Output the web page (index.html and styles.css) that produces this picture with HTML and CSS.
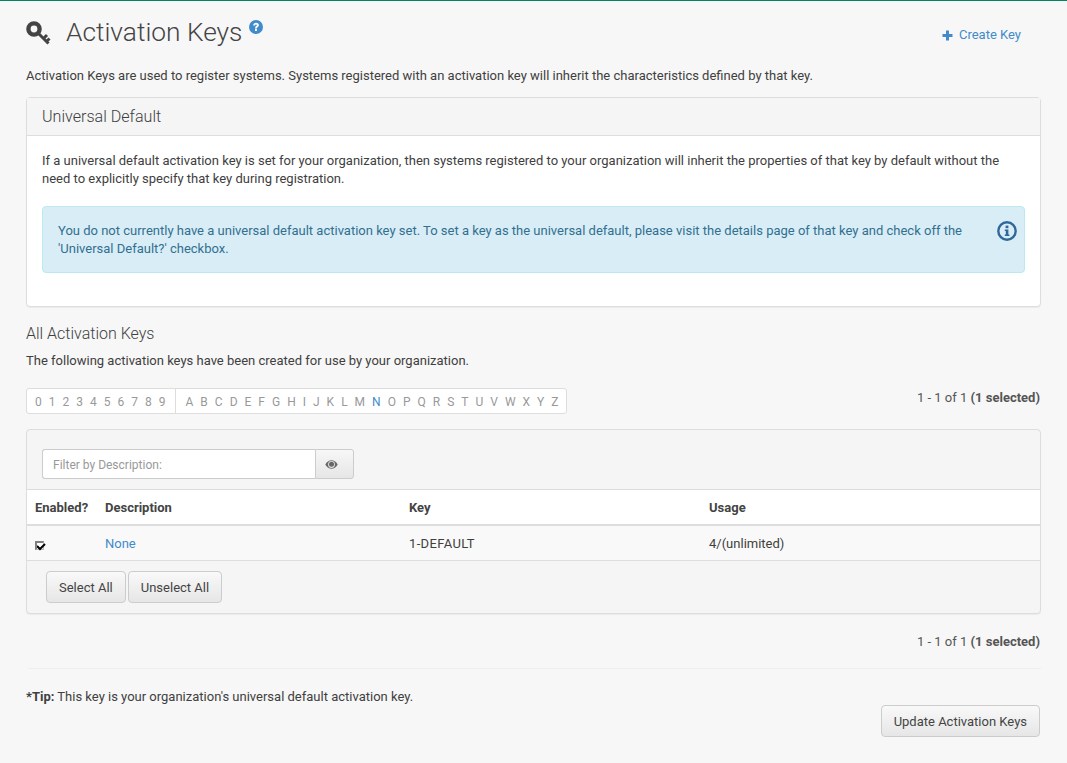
FILE: index.html
```html
<!DOCTYPE html>
<html lang="en">
<head>
<meta charset="UTF-8">
<title>Activation Keys</title>
<link rel="stylesheet" href="styles.css">
</head>
<body>
<div class="page">
  <div class="toolbar">
    <div class="title-wrap">
      <svg class="key-icon" width="26" height="26" viewBox="0 0 26 26">
        <circle cx="8" cy="8" r="5.6" fill="none" stroke="#444" stroke-width="4.4"/>
        <path d="M12 12L22.5 22.5M17.5 17.5l3.5-3.5M20.5 20.5l3-3" fill="none" stroke="#444" stroke-width="3"/>
      </svg>
      <h1>Activation Keys</h1>
      <svg class="help-icon" width="14" height="14" viewBox="0 0 14 14">
        <circle cx="7" cy="7" r="7" fill="#428bca"/>
        <path d="M4.2 5.4C4.3 3.7 5.5 2.8 7.1 2.8c1.6 0 2.8.9 2.8 2.3 0 2-2 1.8-2 3.3H6c0-2.3 1.9-2.3 1.9-3.2 0-.5-.4-.8-.9-.8-.6 0-.9.4-1 1z" fill="#fff"/>
        <rect x="6" y="9.1" width="1.9" height="1.9" fill="#fff"/>
      </svg>
    </div>
    <a class="create-link" href="#">
      <svg width="11" height="11" viewBox="0 0 11 11"><path d="M4 0.5h3V4h3.5v3H7v3.5H4V7H0.5V4H4z" fill="#428bca"/></svg>
      Create Key
    </a>
  </div>

  <p class="intro">Activation Keys are used to register systems. Systems registered with an activation key will inherit the characteristics defined by that key.</p>

  <div class="panel">
    <div class="panel-heading">Universal Default</div>
    <div class="panel-body">
      <p class="panel-text">If a universal default activation key is set for your organization, then systems registered to your organization will inherit the properties of that key by default without the need to explicitly specify that key during registration.</p>
      <div class="alert">
        <span class="alert-text">You do not currently have a universal default activation key set. To set a key as the universal default, please visit the details page of that key and check off the 'Universal Default?' checkbox.</span>
        <svg class="alert-icon" width="20" height="20" viewBox="0 0 20 20">
          <circle cx="10" cy="10" r="8.7" fill="none" stroke="#31689b" stroke-width="2.4"/>
          <rect x="8.6" y="4.6" width="2.8" height="2.6" fill="#31689b"/>
          <path d="M7.8 8.4h3.6v5h1v1.6H7.8v-1.6h1v-3.4h-1z" fill="#31689b"/>
        </svg>
      </div>
    </div>
  </div>

  <h2 class="section-title">All Activation Keys</h2>
  <p class="section-text">The following activation keys have been created for use by your organization.</p>

  <div class="pager-row">
    <div class="alpha-bar">
      <div class="alpha-group">
        <span>0</span><span>1</span><span>2</span><span>3</span><span>4</span><span>5</span><span>6</span><span>7</span><span>8</span><span>9</span>
      </div>
      <div class="alpha-group">
        <span>A</span><span>B</span><span>C</span><span>D</span><span>E</span><span>F</span><span>G</span><span>H</span><span>I</span><span>J</span><span>K</span><span>L</span><span>M</span><span class="active">N</span><span>O</span><span>P</span><span>Q</span><span>R</span><span>S</span><span>T</span><span>U</span><span>V</span><span>W</span><span>X</span><span>Y</span><span>Z</span>
      </div>
    </div>
    <div class="count count-top">1 - 1 of 1 <b>(1 selected)</b></div>
  </div>

  <div class="list-panel">
    <div class="filter-row">
      <div class="filter-group">
        <input class="filter-input" type="text" placeholder="Filter by Description:">
        <button class="filter-btn">
          <svg width="13" height="9" viewBox="0 0 13 9">
            <path d="M0.3 4.5C2 1.6 4.2 0.3 6.5 0.3s4.5 1.3 6.2 4.2c-1.7 2.9-3.9 4.2-6.2 4.2S2 7.4 0.3 4.5z" fill="#6a6a6a"/>
            <circle cx="6.5" cy="4.5" r="3.4" fill="#e4e4e4"/>
            <circle cx="6.5" cy="4.3" r="2.5" fill="#666"/>
          </svg>
        </button>
      </div>
    </div>
    <table class="key-table">
      <thead>
        <tr>
          <th class="col-enabled">Enabled?</th>
          <th class="col-desc">Description</th>
          <th class="col-key">Key</th>
          <th>Usage</th>
        </tr>
      </thead>
      <tbody>
        <tr>
          <td>
            <span class="check-box">
              <svg width="10" height="9" viewBox="0 0 10 9"><path d="M0 3l3 3 5-5" fill="none" stroke="#000" stroke-width="2"/></svg>
            </span>
          </td>
          <td><a href="#">None</a></td>
          <td class="key-cell">1-DEFAULT</td>
          <td>4/(unlimited)</td>
        </tr>
      </tbody>
    </table>
    <div class="list-footer">
      <button class="btn">Select All</button>
      <button class="btn">Unselect All</button>
    </div>
  </div>

  <div class="count count-bottom">1 - 1 of 1 <b>(1 selected)</b></div>
  <hr class="divider">
  <p class="tip"><b>*Tip:</b> This key is your organization's universal default activation key.</p>
  <div class="actions">
    <button class="btn">Update Activation Keys</button>
  </div>
</div>
</body>
</html>
```

FILE: styles.css
```css
body {
    margin: 0;
    padding: 0;
    background-color: #f7f7f7;
    color: #404040;
    font-family: Roboto, "Liberation Sans", sans-serif;
    font-size: 13px;
    line-height: 18px;
    border-top: 1px solid #00875f;
}

a {
    color: #428bca;
    text-decoration: none;
}

p {
    margin: 0;
}

.page {
    padding: 0 26px;
}

.toolbar {
    display: flex;
    justify-content: space-between;
    height: 66px;
}

.title-wrap {
    display: flex;
    align-items: flex-start;
}

.key-icon {
    margin-top: 20px;
}

h1 {
    margin: 13px 0 0 14px;
    font-size: 26.3px;
    line-height: 36px;
    font-weight: 300;
    color: #444;
}

.help-icon {
    margin: 19px 0 0 7px;
}

.create-link {
    display: flex;
    align-items: center;
    gap: 6px;
    height: 18px;
    margin: 25px 20px 0 0;
}

.intro {
    margin-bottom: 12px;
}

.panel {
    background-color: #fff;
    border: 1px solid #ddd;
    border-radius: 4px;
    box-shadow: 0 1px 1px rgba(0, 0, 0, 0.05);
}

.panel-heading {
    height: 37px;
    padding: 0 15px;
    line-height: 37px;
    font-size: 16.1px;
    font-weight: 300;
    background-color: #f5f5f5;
    border-bottom: 1px solid #ddd;
}

.panel-body {
    padding: 16px 15px 33px;
}

.panel-text {
    margin-bottom: 18px;
}

.alert {
    display: flex;
    align-items: flex-start;
    justify-content: space-between;
    height: 67px;
    padding: 14px 7px 0 15px;
    color: #31708f;
    background-color: #d9edf7;
    border: 1px solid #bce8f1;
    border-radius: 4px;
    box-sizing: border-box;
}

.alert-text {
    width: 915px;
    margin-top: 1px;
}

.section-title {
    margin: 17px 0 0;
    font-size: 16px;
    line-height: 20px;
    font-weight: 300;
}

.section-text {
    margin-top: 8px;
}

.pager-row {
    display: flex;
    justify-content: space-between;
    align-items: flex-start;
    margin-top: 18px;
}

.alpha-bar {
    display: flex;
    height: 26px;
    background-color: #fff;
    border: 1px solid #ddd;
    border-radius: 3px;
    box-sizing: border-box;
    color: #999;
    font-size: 12px;
    line-height: 26px;
}

.alpha-group {
    display: flex;
    gap: 7px;
    padding: 0 9px 0 8px;
}

.alpha-group + .alpha-group {
    padding: 0 7px 0 10px;
    border-left: 1px solid #ddd;
}

.alpha-group .active {
    color: #428bca;
}

.count {
    text-align: right;
    color: #555;
    padding-right: 1px;
}

.count-top {
    margin-top: 1px;
}

.list-panel {
    margin-top: 15px;
    background-color: #f5f5f5;
    border: 1px solid #ddd;
    border-radius: 4px;
    box-shadow: 0 1px 1px rgba(0, 0, 0, 0.05);
}

.filter-row {
    padding: 19px 15px 10px;
}

.filter-group {
    display: flex;
    width: 312px;
    height: 30px;
}

.filter-input {
    flex: 1;
    min-width: 0;
    padding: 2px 10px 0;
    font-family: Roboto, "Liberation Sans", sans-serif;
    font-size: 12px;
    background-color: #fff;
    border: 1px solid #ccc;
    border-right: none;
    border-radius: 3px 0 0 3px;
    box-sizing: border-box;
}

.filter-input::placeholder {
    color: #999;
    opacity: 1;
}

.filter-btn {
    width: 39px;
    padding: 0 6px 0 0;
    background: linear-gradient(#f7f7f7, #e6e6e6);
    border: 1px solid #ccc;
    border-radius: 0 3px 3px 0;
}

.key-table {
    width: 100%;
    border-collapse: collapse;
    background-color: #fff;
}

.key-table th {
    height: 32px;
    padding: 2px 8px 0;
    text-align: left;
    font-weight: 700;
    font-size: 13px;
    color: #444;
    border-top: 1px solid #ddd;
    border-bottom: 2px solid #ddd;
}

.key-table td {
    height: 32px;
    padding: 2px 8px 0;
    background-color: #f9f9f9;
    border-bottom: 1px solid #ddd;
}

.key-table .key-cell {
    letter-spacing: 0.35px;
}

.col-enabled {
    width: 54px;
}

.col-desc {
    width: 288px;
}

.col-key {
    width: 284px;
}

.check-box {
    display: block;
    position: relative;
    width: 9px;
    height: 9px;
    margin-top: 3px;
    background-color: #fff;
    border-style: solid;
    border-width: 2px 1px 1px 2px;
    border-color: #808080 #bbb #bbb #808080;
    box-sizing: border-box;
}

.check-box svg {
    position: absolute;
    left: 0;
    top: 0;
}

.list-footer {
    display: flex;
    gap: 2px;
    padding: 10px 19px;
}

.btn {
    height: 32px;
    padding: 0 12px;
    font-family: Roboto, "Liberation Sans", sans-serif;
    font-size: 13px;
    color: #444;
    background: linear-gradient(#f9f9f9, #e6e6e6);
    border: 1px solid #ccc;
    border-radius: 4px;
}

.count-bottom {
    margin-top: 19px;
}

.divider {
    margin: 17px 0 0 2px;
    border: none;
    border-top: 1px solid #eee;
}

.tip {
    margin-top: 19px;
}

.actions {
    display: flex;
    justify-content: flex-end;
    margin-top: -1px;
    padding-right: 1px;
}
```
